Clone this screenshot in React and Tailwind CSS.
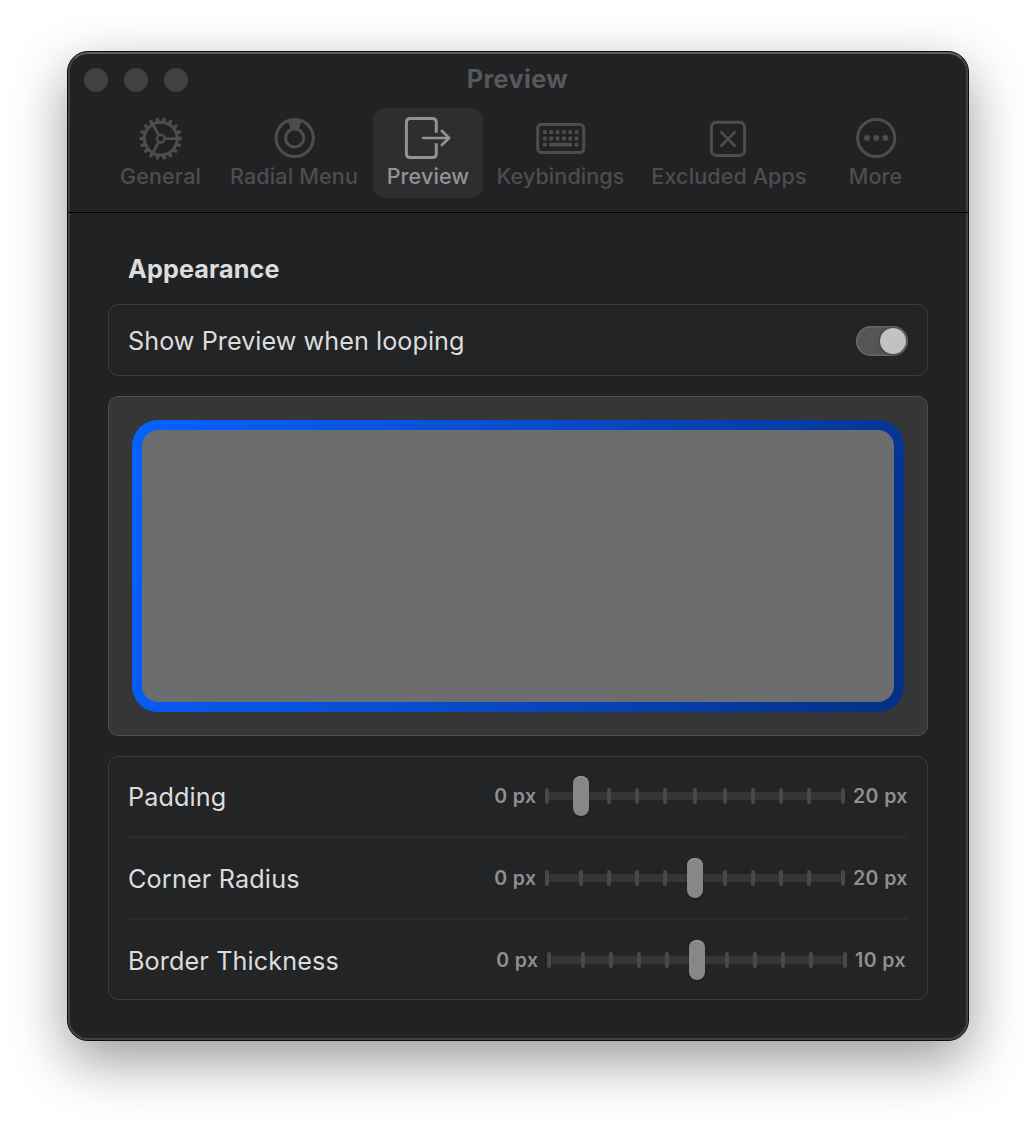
import React from "react";

const TEETH = Array.from({ length: 18 }, (_, i) => i * 20 + 10);

function Icon({ children }) {
  return (
    <svg width="60" height="48" viewBox="-30 -24 60 48" fill="none" stroke="currentColor" strokeWidth="3" strokeLinecap="round" strokeLinejoin="round" className="shrink-0">
      {children}
    </svg>
  );
}

const GearIcon = () => (
  <Icon>
    <g transform="translate(-0.2 0.6)">
      <circle r="16.4" strokeWidth="3" />
      <circle r="3.9" strokeWidth="2.5" />
      <path d="M4.8 0H16M-2.4 -4.2L-8 -14M-2.4 4.2L-8 14" strokeWidth="2.8" strokeLinecap="butt" />
      {TEETH.map((a) => (
        <path key={a} transform={`rotate(${a})`} d="M-2.1 -17.3L-1.3 -21.3H1.3L2.1 -17.3Z" fill="currentColor" stroke="none" />
      ))}
    </g>
  </Icon>
);

const RadialIcon = () => (
  <Icon>
    <g transform="translate(0.7 0)">
      <circle r="18.6" />
      <circle r="9.1" />
      <path d="M-7 -17.8H7L3.9 -8.2H-3.9Z" fill="currentColor" stroke="none" />
    </g>
  </Icon>
);

const PreviewIcon = () => (
  <Icon>
    <path d="M8.3 -5.3V-15.6Q8.3 -19.6 4.3 -19.6H-17.6Q-21.6 -19.6 -21.6 -15.6V15.6Q-21.6 19.6 -17.6 19.6H4.3Q8.3 19.6 8.3 15.6V5.3" strokeLinecap="butt" />
    <path d="M-4.8 0H21M13.9 -7L21.1 0L13.9 7" strokeWidth="2.7" />
  </Icon>
);

const KEYS = [-15.8, -9.5, -3.2, 3.2, 9.5, 15.8];

const KeyboardIcon = () => (
  <Icon>
    <g transform="translate(-0.3 0.5)">
      <rect x="-23" y="-14.1" width="46" height="28.2" rx="3.6" />
      <g fill="currentColor" stroke="none">
        {[-8.2, -1.9].map((y) => KEYS.map((x) => <rect key={`${x} ${y}`} x={x - 1.9} y={y} width="3.8" height="3.8" rx="0.7" />))}
        <rect x="-17.7" y="4.3" width="3.8" height="3.8" rx="0.7" />
        <rect x="-11.3" y="4.3" width="22.6" height="3.8" rx="0.7" />
        <rect x="13.9" y="4.3" width="3.8" height="3.8" rx="0.7" />
      </g>
    </g>
  </Icon>
);

const ExcludedIcon = () => (
  <Icon>
    <g transform="translate(-1 0.9)">
      <rect x="-16.6" y="-16.6" width="33.2" height="33.2" rx="5" />
      <path d="M-6.8 -6.8L6.8 6.8M6.8 -6.8L-6.8 6.8" strokeWidth="2.7" />
    </g>
  </Icon>
);

const MoreIcon = () => (
  <Icon>
    <g transform="translate(0.2 0)">
      <circle r="18.6" />
      <g fill="currentColor" stroke="none">
        <circle cx="-9.2" r="2.9" />
        <circle r="2.9" />
        <circle cx="9.2" r="2.9" />
      </g>
    </g>
  </Icon>
);

const TABS = [
  { label: "General", icon: GearIcon, width: "w-[109px]", text: "tracking-[0.15px]" },
  { label: "Radial Menu", icon: RadialIcon, width: "w-[158px]", text: "tracking-[0.18px]" },
  { label: "Preview", icon: PreviewIcon, width: "w-[110px]", text: "tracking-[0.12px]", active: true },
  { label: "Keybindings", icon: KeyboardIcon, width: "w-[155px]", text: "tracking-[0.1px]" },
  { label: "Excluded Apps", icon: ExcludedIcon, width: "w-[182px]", text: "tracking-[0.13px]" },
  { label: "More", icon: MoreIcon, width: "w-[111px]", text: "tracking-[0.15px]" },
];

function Tab({ label, icon: TabIcon, width, text, active }) {
  return (
    <button className={`flex h-[90px] shrink-0 flex-col items-center rounded-xl pt-[6px] ${width} ${active ? "bg-[#2d2e30] text-[#929395]" : "text-[#4c4d4f]"}`}>
      <TabIcon />
      <span className={`whitespace-nowrap text-[21.5px] leading-7 font-medium ${text}`}>{label}</span>
    </button>
  );
}

const GAPS = ["", "ml-[30px]", "ml-6", "ml-6", "ml-6", "ml-[26px]", "ml-[26px]", "ml-6", "ml-6", "ml-6", "ml-[30px]"];

function Slider({ value }) {
  return (
    <div className="relative flex h-10 w-[300px] shrink-0 items-center">
      <div className="absolute inset-x-0.5 top-4 h-2 bg-[#343537]" />
      {GAPS.map((gap, i) => (
        <div key={i} className={`relative flex h-4 w-1 shrink-0 items-center justify-center rounded-[2px] bg-[#48494b] ${gap}`}>
          {i === value && <div className="h-10 w-4 shrink-0 rounded-lg bg-[#868789] shadow-[inset_0_1px_0_#9c9d9e,0_1px_2px_rgba(0,0,0,0.35)]" />}
        </div>
      ))}
    </div>
  );
}

const ROWS = [
  { label: "Padding", max: "20 px", value: 1, pad: "pr-5", maxWidth: "w-[54px]", text: "tracking-[0.12px]" },
  { label: "Corner Radius", max: "20 px", value: 5, pad: "pr-5", maxWidth: "w-[54px]", text: "tracking-[0.17px]" },
  { label: "Border Thickness", max: "10 px", value: 5, pad: "pr-[21px]", maxWidth: "w-[51px]", text: "tracking-[0.12px]" },
];

function SliderRow({ label, max, value, pad, maxWidth, text }) {
  return (
    <div className={`flex h-20 items-center justify-between pl-[19px] ${pad}`}>
      <span className={`mt-0.5 text-[25.2px] leading-8 font-normal ${text}`}>{label}</span>
      <div className="flex items-center text-[19.5px] leading-6 font-semibold tracking-[0.4px] text-[#8f9091]">
        <span className="mr-[8.5px]">0 px</span>
        <Slider value={value} />
        <span className={`ml-2 whitespace-nowrap ${maxWidth}`}>{max}</span>
      </div>
    </div>
  );
}

export default function App() {
  return (
    <div className="flex h-[1124px] w-[1036px] items-start overflow-hidden bg-white pt-[51px] pl-[67px] font-['Inter',sans-serif] text-[#dcdcdd]">
      <div className="h-[990px] w-[902px] overflow-visible rounded-[21px] border border-[#0c0d0d] bg-[#212224] shadow-[0_20px_55px_rgba(0,0,0,0.4)]">
        <div className="h-full rounded-[20px] border-2 border-[#414244] border-t-[#5b5e60]">
          <header className="-mx-0.5 -mt-0.5 h-[161px] border-b border-black">
            <div className="flex h-14 items-center">
              <div className="ml-4 flex w-[104px] gap-4">
                <span className="size-6 rounded-full bg-[#404143]" />
                <span className="size-6 rounded-full bg-[#404143]" />
                <span className="size-6 rounded-full bg-[#404143]" />
              </div>
              <h1 className="-mt-0.5 w-[659px] text-center text-[25.2px] leading-8 font-bold tracking-[0.4px] text-[#56585b]">Preview</h1>
            </div>
            <nav className="ml-[38px] flex">
              {TABS.map((tab) => (
                <Tab key={tab.label} {...tab} />
              ))}
            </nav>
          </header>

          <main className="px-[38px] pt-10">
            <h2 className="ml-5 text-[25.2px] leading-8 font-bold tracking-[0.12px]">Appearance</h2>
            <section className="mt-[19px] flex h-[72px] items-center justify-between rounded-[10px] border border-[#3b3c3e] bg-[#232426] px-[19px] pt-0.5">
              <span className="text-[25.2px] leading-8 font-normal tracking-[0.05px]">Show Preview when looping</span>
              <div className="flex h-[30px] w-[52px] items-center justify-end rounded-full bg-[#545557] pr-0.5 shadow-[inset_0_0_0_1.5px_#66676a]">
                <span className="size-[26px] rounded-full bg-[#c2c1c4] shadow-[0_0_3px_rgba(0,0,0,0.5)]" />
              </div>
            </section>

            <section className="mt-5 h-[340px] rounded-[10px] border border-[#4d4e4f] bg-[#353637] p-[23px]">
              <div className="h-full rounded-[26px] bg-[linear-gradient(110.7deg,#0561ff,#084bca_48%,#042f85)] p-2.5">
                <div className="h-full rounded-2xl bg-[#6c6d6e]" />
              </div>
            </section>

            <section className="mt-5 h-[244px] rounded-[10px] border border-[#3b3c3e] bg-[#232426]">
              <div className="-my-px">
                {ROWS.map((row, i) => (
                  <React.Fragment key={row.label}>
                    {i > 0 && <div className="mx-[19px] h-0.5 bg-[#2b2c2e]" />}
                    <SliderRow {...row} />
                  </React.Fragment>
                ))}
              </div>
            </section>
          </main>
        </div>
      </div>
    </div>
  );
}
